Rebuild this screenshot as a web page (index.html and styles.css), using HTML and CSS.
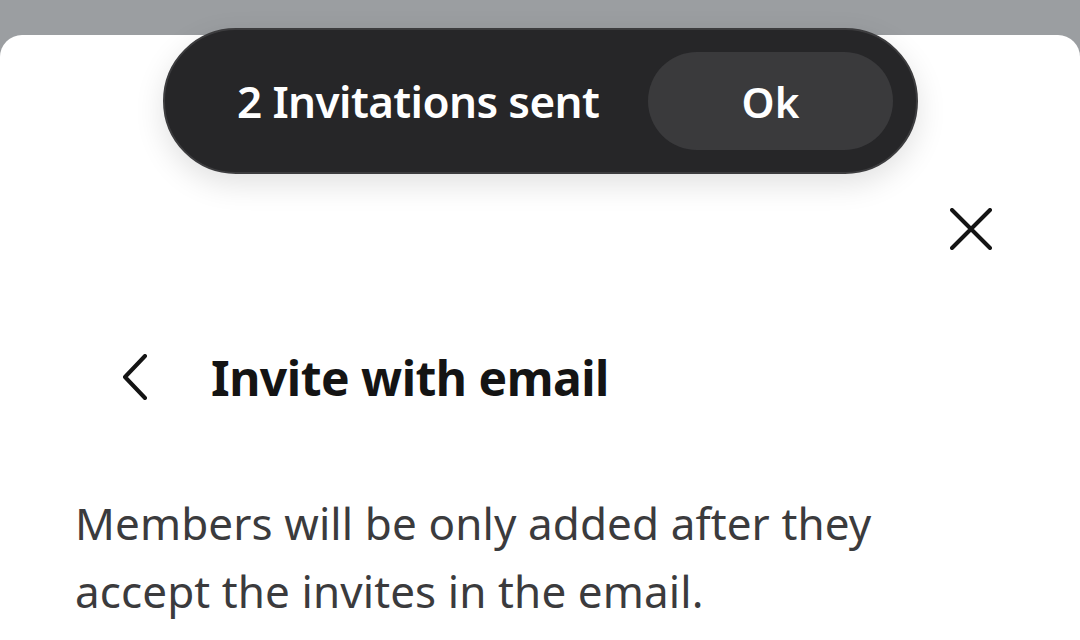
FILE: index.html
```html
<!DOCTYPE html>
<html lang="en">
  <head>
    <meta charset="UTF-8" />
    <meta name="viewport" content="width=device-width, initial-scale=1.0" />
    <title>Invite with email</title>
    <link rel="stylesheet" href="styles.css">
  </head>
  <body>
    <!-- Bottom sheet -->
    <div class="sheet">
      <div class="sheet-top">
        <button class="icon-btn close-btn" aria-label="Close">
          <svg width="42" height="42" viewBox="0 0 42 42">
            <path d="M2 2 L40 40 M40 2 L2 40" />
          </svg>
        </button>
      </div>

      <div class="sheet-nav">
        <button class="icon-btn back-btn" aria-label="Back">
          <svg width="28" height="46" viewBox="0 0 28 46">
            <path d="M24 2 L4 23 L24 44" />
          </svg>
        </button>
        <h1>Invite with email</h1>
      </div>

      <p class="sheet-text">Members will be only added after they accept the invites in the email.</p>
    </div>

    <!-- Toast -->
    <div class="toast">
      <span class="toast-msg">2 Invitations sent</span>
      <button class="toast-btn">Ok</button>
    </div>
  </body>
</html>
```

FILE: styles.css
```css
:root {
  --backdrop: #9b9ea1;
  --sheet-bg: #ffffff;
  --ink: #141414;
  --text: #3b3b3d;
  --toast-bg: #262628;
  --toast-border: #3c3c3e;
  --toast-btn: #3a3a3c;
}

* {
  margin: 0;
  padding: 0;
  box-sizing: border-box;
  font-family: 'Noto Sans', 'Open Sans', sans-serif;
}

body {
  background-color: var(--backdrop);
  height: 640px;
  overflow: hidden;
}

.sheet {
  margin-top: 35px;
  min-height: 605px;
  background: var(--sheet-bg);
  border-radius: 22px 22px 0 0;
  padding: 173px 88px 0 75px;
}

.icon-btn {
  background: none;
  border: none;
  display: flex;
  cursor: pointer;
}

.icon-btn svg path {
  fill: none;
  stroke: var(--ink);
  stroke-width: 4;
  stroke-linecap: round;
  stroke-linejoin: round;
}

.sheet-top {
  display: flex;
  justify-content: flex-end;
}

.sheet-nav {
  display: flex;
  align-items: center;
  margin-top: 104px;
  padding-left: 46px;
  height: 46px;
}

.sheet-nav h1 {
  margin-left: 62px;
  font-size: 48px;
  font-weight: 700;
  color: var(--ink);
  letter-spacing: -0.5px;
}

.sheet-text {
  margin-top: 89px;
  font-size: 44px;
  letter-spacing: 0.1px;
  line-height: 68px;
  color: var(--text);
  max-width: 860px;
}

/* Floating confirmation over the sheet */
.toast {
  position: absolute;
  left: 163px;
  top: 28px;
  width: 755px;
  height: 146px;
  border-radius: 73px;
  background: var(--toast-bg);
  border: 2px solid var(--toast-border);
  box-shadow: 0 10px 30px rgba(0, 0, 0, 0.12);
  display: flex;
  align-items: center;
  padding: 0 23px 0 72px;
}

.toast-msg {
  flex: 1;
  color: #ffffff;
  font-size: 44px;
  font-weight: 600;
  letter-spacing: -0.6px;
}

.toast-btn {
  width: 245px;
  height: 98px;
  border: none;
  border-radius: 49px;
  background: var(--toast-btn);
  color: #ffffff;
  font-size: 42px;
  font-weight: 600;
  cursor: pointer;
}
```
